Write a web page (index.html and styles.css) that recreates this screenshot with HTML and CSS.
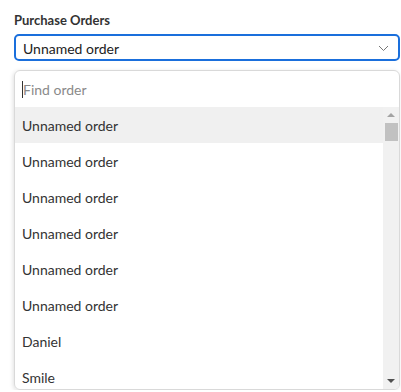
FILE: index.html
```html
<!DOCTYPE html>
<html lang="en">

<head>
    <meta charset="UTF-8" />
    <meta name="viewport" content="width=device-width, initial-scale=1.0" />
    <title>Purchase Orders</title>
    <link rel="stylesheet" href="styles.css">
</head>

<body>
    <div class="field">
        <label class="field-label">Purchase Orders</label>

        <div class="select">
            <span>Unnamed order</span>
            <svg class="chevron" width="11" height="7" viewBox="0 0 11 7">
                <path d="M1 1 L5.5 5.5 L10 1" fill="none" stroke="#777" stroke-width="1" />
            </svg>
        </div>

        <div class="dropdown">
            <div class="search">
                <span class="caret"></span>
                <span class="placeholder">Find order</span>
            </div>
            <div class="list-wrap">
                <ul class="options">
                    <li class="active">Unnamed order</li>
                    <li>Unnamed order</li>
                    <li>Unnamed order</li>
                    <li>Unnamed order</li>
                    <li>Unnamed order</li>
                    <li>Unnamed order</li>
                    <li>Daniel</li>
                    <li>Smile</li>
                </ul>
                <div class="scrollbar">
                    <span class="arrow up"></span>
                    <span class="thumb"></span>
                    <span class="track"></span>
                    <span class="arrow down"></span>
                </div>
            </div>
        </div>
    </div>
</body>

</html>
```

FILE: styles.css
```css
body {
    font-family: 'Segoe UI', Lato, sans-serif;
    margin: 0;
    background-color: #fff;
    color: #333;
}

.field {
    padding: 12px 1px 0 14px;
}

.field-label {
    display: block;
    font-size: 13px;
    font-weight: 700;
    color: #333;
    margin-bottom: 6px;
}

.select {
    display: flex;
    align-items: center;
    justify-content: space-between;
    height: 27px;
    box-sizing: border-box;
    border: 2px solid #1a6fdc;
    border-radius: 5px;
    padding: 1px 8px 0 7px;
    font-size: 14px;
    color: #222;
}

.chevron {
    margin-right: 1px;
}

.dropdown {
    margin-top: 9px;
    height: 320px;
    box-sizing: border-box;
    border: 1px solid #d9d9d9;
    border-radius: 6px;
    box-shadow: -1px 1px 4px rgba(0, 0, 0, 0.12);
    overflow: hidden;
    display: flex;
    flex-direction: column;
}

.search {
    display: flex;
    align-items: center;
    height: 36px;
    padding-left: 7px;
    font-size: 14px;
    flex: none;
}

.caret {
    width: 1px;
    height: 17px;
    background-color: #333;
}

.placeholder {
    color: #8a8a8a;
}

.list-wrap {
    display: flex;
    flex: 1;
    overflow: hidden;
}

.options {
    list-style: none;
    margin: 0;
    padding: 0;
    flex: 1;
}

.options li {
    height: 36px;
    line-height: 37px;
    overflow: hidden;
    padding-left: 7px;
    font-size: 14px;
    color: #333;
}

.options li.active {
    background-color: #f0f0f0;
}

.scrollbar {
    width: 16px;
    flex: none;
    background-color: #f1f1f1;
    display: flex;
    flex-direction: column;
    align-items: center;
}

.arrow {
    width: 0;
    height: 0;
    border-left: 4px solid transparent;
    border-right: 4px solid transparent;
    margin: 6px 0;
}

.arrow.up {
    border-bottom: 4px solid #a3a3a3;
}

.arrow.down {
    border-top: 4px solid #505050;
}

.thumb {
    width: 13px;
    height: 18px;
    background-color: #c1c1c1;
}

.track {
    flex: 1;
}
```
